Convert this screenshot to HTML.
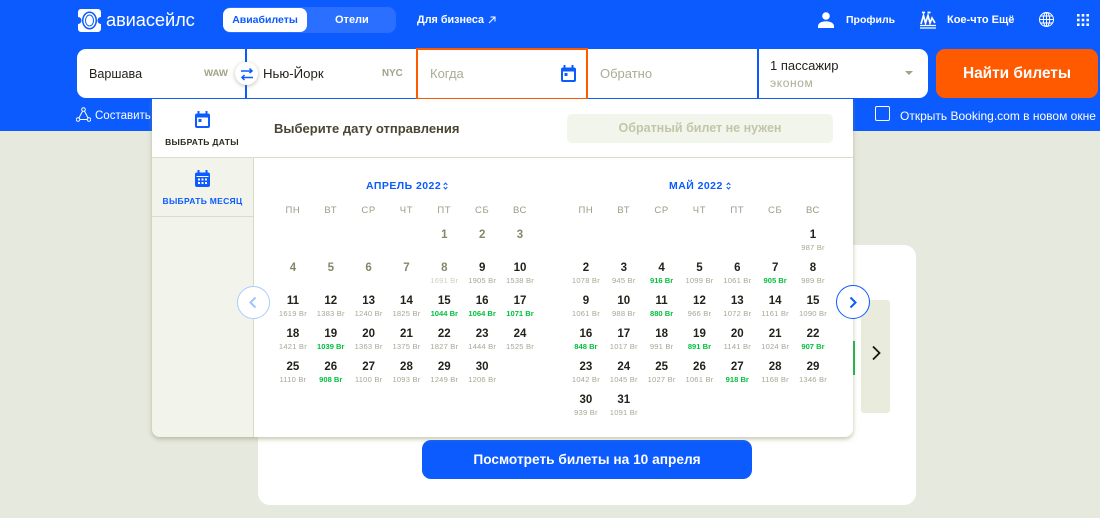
<!DOCTYPE html>
<html lang="ru"><head><meta charset="utf-8"><title>Авиасейлс</title>
<style>
*{box-sizing:border-box}
html,body{margin:0;padding:0}
body{width:1100px;height:518px;position:relative;overflow:hidden;background:#e6e9de;font-family:"Liberation Sans",sans-serif;color:#23231b}
.a{position:absolute;white-space:nowrap}
.hd{left:0;top:0;width:1100px;height:131px;background:#0b5bff}
.w{color:#fff;font-weight:700}
.m{position:absolute;display:grid;grid-template-columns:repeat(7,37.85px);grid-auto-rows:33px;top:219px;text-align:center}
.c b{display:block;margin-top:8px;height:16px;line-height:16px;font-size:11.5px;color:#23231b}
.c i{display:block;font-style:normal;height:10px;line-height:10px;font-size:7.6px;letter-spacing:.2px;color:#a6a893}
.c i.g{color:#00c13d;font-weight:700;letter-spacing:0}
.c i.l{color:#cfd0bd}
.c.p b{color:#87866a}
.wd{position:absolute;top:205px;display:grid;grid-template-columns:repeat(7,37.85px);text-align:center;font-size:9.5px;line-height:12px;letter-spacing:.6px;color:#9b9c84}
.mt{color:#0b5bff;font-weight:700;font-size:10.5px;letter-spacing:.45px;line-height:14px}
</style></head><body>
<div class="a hd"></div>

<!-- logo -->
<svg class="a" style="left:78px;top:9px" width="23" height="23" viewBox="0 0 23 23"><path d="M3 0h17a3 3 0 0 1 3 3v5a3.500 3.500 0 0 0 0 7v5a3 3 0 0 1-3 3H3a3 3 0 0 1-3-3v-5a3.500 3.500 0 0 0 0-7V3a3 3 0 0 1 3-3z" fill="#fff"/><ellipse cx="11.500" cy="11.500" rx="7.500" ry="9" fill="#0b5bff"/><ellipse cx="11.500" cy="11.500" rx="6" ry="7.500" fill="#fff"/><ellipse cx="11.500" cy="11.500" rx="4" ry="5.500" fill="none" stroke="#0b5bff" stroke-width="1"/></svg>
<div class="a" style="left:106px;top:9px;font-size:18.3px;line-height:22px;color:#fff;letter-spacing:-.1px">авиасейлс</div>

<!-- tabs -->
<div class="a" style="left:223px;top:7px;width:173px;height:26px;background:#2a6fff;border-radius:8px"></div>
<div class="a" style="left:223px;top:8px;width:84px;height:24px;background:#fff;border-radius:7px;text-align:center;font-weight:700;font-size:10.5px;line-height:24px;color:#0b5bff">Авиабилеты</div>
<div class="a w" style="left:335px;top:8px;font-size:11px;line-height:24px">Отели</div>
<div class="a w" style="left:417px;top:8px;font-size:10.8px;line-height:24px">Для бизнеса</div>
<svg class="a" style="left:488px;top:16px" width="8" height="8" viewBox="0 0 8 8"><path d="M1 7 7 1M2.500 1H7v4.500" fill="none" stroke="#fff" stroke-width="1"/></svg>

<!-- right nav -->
<svg class="a" style="left:818px;top:12px" width="16" height="16" viewBox="0 0 16 16"><circle cx="8" cy="4" r="3.800" fill="#fff"/><path d="M0 16v-2c0-3 4-4.800 8-4.800s8 1.800 8 4.800v2z" fill="#fff"/></svg>
<div class="a w" style="left:846px;top:8px;font-size:10.5px;line-height:24px">Профиль</div>
<svg class="a" style="left:919px;top:11px" width="18" height="18" viewBox="0 0 18 18" fill="none" stroke="#fff" stroke-width="1.700"><path d="M3 1.500h3M8.500 1.500h3"/><path d="M2 13 4.500 4.500l2 7.500 2.500-7.500 2 7.500 2-5 3 5"/><path d="M1 14.500h16M1 17h16" stroke-width="1.300"/></svg>
<div class="a w" style="left:947px;top:8px;font-size:11px;line-height:24px">Кое-что Ещё</div>
<svg class="a" style="left:1039px;top:12px" width="15" height="15" viewBox="0 0 15 15" fill="none" stroke="#fff" stroke-width="1"><circle cx="7.500" cy="7.500" r="7"/><ellipse cx="7.500" cy="7.500" rx="3.200" ry="7"/><path d="M7.500.5v14M.5 7.500h14M1.500 4h12M1.500 11h12"/></svg>
<svg class="a" style="left:1077px;top:14px" width="12" height="12" viewBox="0 0 12 12" fill="#fff"><rect x="0" y="0" width="2.600" height="2.600"/><rect x="4.700" y="0" width="2.600" height="2.600"/><rect x="9.400" y="0" width="2.600" height="2.600"/><rect x="0" y="4.700" width="2.600" height="2.600"/><rect x="4.700" y="4.700" width="2.600" height="2.600"/><rect x="9.400" y="4.700" width="2.600" height="2.600"/><rect x="0" y="9.400" width="2.600" height="2.600"/><rect x="4.700" y="9.400" width="2.600" height="2.600"/><rect x="9.400" y="9.400" width="2.600" height="2.600"/></svg>

<!-- search form -->
<div class="a" style="left:77px;top:49px;width:851px;height:49px;background:#fff;border-radius:9px"></div>
<div class="a" style="left:245px;top:49px;width:2px;height:50px;background:#0b5bff"></div>
<div class="a" style="left:245px;top:98px;width:172px;height:2px;background:#0b5bff"></div>
<div class="a" style="left:587px;top:98px;width:266px;height:2px;background:#0b5bff"></div>
<div class="a" style="left:757px;top:49px;width:2px;height:50px;background:#0b5bff"></div>
<div class="a" style="left:416px;top:48px;width:172px;height:52px;border:2px solid #ff5a00"></div>
<div class="a" style="left:89px;top:64px;font-size:12.6px;line-height:20px">Варшава</div>
<div class="a" style="left:204px;top:65px;font-size:9.600px;line-height:18px;font-weight:700;color:#9ea486">WAW</div>
<div class="a" style="left:263px;top:64px;font-size:13.200px;line-height:20px">Нью-Йорк</div>
<div class="a" style="left:382px;top:65px;font-size:9.800px;line-height:18px;font-weight:700;color:#9ea486">NYC</div>
<div class="a" style="left:430px;top:64px;font-size:13px;line-height:20px;color:#a9ae93">Когда</div>
<div class="a" style="left:600px;top:64px;font-size:13px;line-height:20px;color:#a9ae93">Обратно</div>
<div class="a" style="left:770px;top:56px;font-size:13px;line-height:20px">1 пассажир</div>
<div class="a" style="left:770px;top:74px;font-size:12px;letter-spacing:.6px;line-height:18px;color:#a9ae93">эконом</div>
<div class="a" style="left:905px;top:71px;width:0;height:0;border-left:4px solid transparent;border-right:4px solid transparent;border-top:4.500px solid #9ea486"></div>
<div class="a" style="left:936px;top:49px;width:162px;height:49px;background:#ff5a00;border-radius:9px;text-align:center;color:#fff;font-weight:700;font-size:15.400px;line-height:49px">Найти билеты</div>

<!-- swap -->
<div class="a" style="left:235px;top:62px;width:23px;height:23px;border-radius:50%;background:#fff;box-shadow:0 1px 4px rgba(120,120,70,.45)"></div>
<svg class="a" style="left:240px;top:67px" width="14" height="14" viewBox="0 0 14 14" fill="none" stroke="#0b5bff" stroke-width="1.500"><path d="M1 4h11M9.500 1.500 12 4 9.500 6M13 10.500H2M4.500 8 2 10.500 4.500 13"/></svg>
<!-- cal icon in form -->
<svg class="a" style="left:561px;top:65px" width="15" height="17" viewBox="0 0 15 17"><rect x="0" y="2.500" width="15" height="14.500" rx="2" fill="#0b5bff"/><rect x="2.500" y="0" width="2" height="4" fill="#0b5bff"/><rect x="10.500" y="0" width="2" height="4" fill="#0b5bff"/><rect x="2" y="6.500" width="11" height="8.500" fill="#fff"/><rect x="3.500" y="8" width="3" height="3" fill="#0b5bff"/></svg>

<!-- subrow -->
<svg class="a" style="left:76px;top:107px" width="15" height="15" viewBox="0 0 15 15" fill="none" stroke="#fff" stroke-width="1"><circle cx="7.500" cy="2.500" r="1.800"/><circle cx="2" cy="12.500" r="1.800"/><circle cx="13" cy="12.500" r="1.800"/><path d="M6.600 4 2.900 11M8.400 4l3.700 7M3.800 12.500h7.400"/></svg>
<div class="a" style="left:95px;top:107px;font-size:11.500px;line-height:18px;color:#fff">Составить</div>
<div class="a" style="left:875px;top:106px;width:15px;height:15px;border:1px solid #fff;border-radius:2px"></div>
<div class="a" style="left:900px;top:107px;font-size:12px;line-height:18px;color:#fff">Открыть Booking.com в новом окне</div>

<!-- background card -->
<div class="a" style="left:258px;top:245px;width:658px;height:260px;background:#fff;border-radius:12px"></div>
<div class="a" style="left:853px;top:341px;width:2px;height:34px;background:#19b84d"></div>
<div class="a" style="left:861px;top:300px;width:29px;height:113px;background:#e9ebdd;border-radius:3px"></div>
<svg class="a" style="left:870px;top:345px" width="12" height="16" viewBox="0 0 12 16"><path d="M3 1.500 9.500 8 3 14.500" fill="none" stroke="#16160f" stroke-width="1.800"/></svg>
<div class="a" style="left:422px;top:440px;width:330px;height:39px;background:#0b5bff;border-radius:9px;text-align:center;color:#fff;font-weight:700;font-size:13.700px;line-height:39px">Посмотреть билеты на 10 апреля</div>

<!-- popup -->
<div class="a" style="left:152px;top:99px;width:701px;height:338px;background:#fff;border-radius:0 0 8px 8px;box-shadow:0 2px 5px rgba(140,140,90,.5)"></div>
<div class="a" style="left:152px;top:157px;width:101px;height:280px;background:#f2f4ec;border-radius:0 0 0 8px"></div>
<div class="a" style="left:152px;top:157px;width:701px;height:1px;background:#dcdccd"></div>
<div class="a" style="left:152px;top:216px;width:101px;height:1px;background:#dcdccd"></div>
<div class="a" style="left:253px;top:158px;width:1px;height:279px;background:#d9d9c8"></div>

<svg class="a" style="left:195px;top:111px" width="15" height="17" viewBox="0 0 15 17"><rect x="0" y="2.500" width="15" height="14.500" rx="2" fill="#0b5bff"/><rect x="2.500" y="0" width="2" height="4" fill="#0b5bff"/><rect x="10.500" y="0" width="2" height="4" fill="#0b5bff"/><rect x="2" y="6.500" width="11" height="8.500" fill="#fff"/><rect x="3.500" y="8" width="3" height="3" fill="#0b5bff"/></svg>
<div class="a" style="left:152px;top:135px;width:100px;text-align:center;font-size:8.500px;line-height:14px;font-weight:700;letter-spacing:.3px;color:#2b2a1f">ВЫБРАТЬ ДАТЫ</div>
<svg class="a" style="left:195px;top:170px" width="15" height="17" viewBox="0 0 15 17"><rect x="0" y="2.500" width="15" height="14.500" rx="2" fill="#0b5bff"/><rect x="2.500" y="0" width="2" height="4" fill="#0b5bff"/><rect x="10.500" y="0" width="2" height="4" fill="#0b5bff"/><g fill="#fff"><rect x="1.500" y="6" width="12" height="1"/><rect x="3" y="8.500" width="2" height="2"/><rect x="6.500" y="8.500" width="2" height="2"/><rect x="10" y="8.500" width="2" height="2"/><rect x="3" y="12" width="2" height="2"/><rect x="6.500" y="12" width="2" height="2"/><rect x="10" y="12" width="2" height="2"/></g></svg>
<div class="a" style="left:152px;top:194px;width:101px;text-align:center;font-size:8.500px;line-height:14px;font-weight:700;letter-spacing:.3px;color:#0b5bff">ВЫБРАТЬ МЕСЯЦ</div>

<div class="a" style="left:274px;top:119px;font-size:13px;line-height:20px;font-weight:700;color:#4a4632">Выберите дату отправления</div>
<div class="a" style="left:567px;top:114px;width:266px;height:29px;background:#f2f5ec;border-radius:5px;text-align:center;font-size:12.500px;line-height:29px;font-weight:700;color:#c4c5a8">Обратный билет не нужен</div>

<!-- months -->
<div class="a mt" style="left:366px;top:179px">АПРЕЛЬ 2022</div>
<svg class="a" style="left:443px;top:182px" width="5" height="8" viewBox="0 0 5 8" fill="none" stroke="#0b5bff" stroke-width="1"><path d="M.7 3 2.500 1 4.300 3M.7 5 2.500 7 4.300 5"/></svg>
<div class="a mt" style="left:669px;top:179px">МАЙ 2022</div>
<svg class="a" style="left:726px;top:182px" width="5" height="8" viewBox="0 0 5 8" fill="none" stroke="#0b5bff" stroke-width="1"><path d="M.7 3 2.500 1 4.300 3M.7 5 2.500 7 4.300 5"/></svg>

<div class="wd" style="left:274px"><span>ПН</span><span>ВТ</span><span>СР</span><span>ЧТ</span><span>ПТ</span><span>СБ</span><span>ВС</span></div>
<div class="wd" style="left:567px"><span>ПН</span><span>ВТ</span><span>СР</span><span>ЧТ</span><span>ПТ</span><span>СБ</span><span>ВС</span></div>

<div class="m" style="left:274px">
<div></div><div></div><div></div><div></div>
<div class="c p"><b>1</b></div><div class="c p"><b>2</b></div><div class="c p"><b>3</b></div>
<div class="c p"><b>4</b></div><div class="c p"><b>5</b></div><div class="c p"><b>6</b></div><div class="c p"><b>7</b></div>
<div class="c p"><b>8</b><i class="l">1691 Br</i></div><div class="c"><b>9</b><i>1905 Br</i></div><div class="c"><b>10</b><i>1538 Br</i></div>
<div class="c"><b>11</b><i>1619 Br</i></div><div class="c"><b>12</b><i>1383 Br</i></div><div class="c"><b>13</b><i>1240 Br</i></div><div class="c"><b>14</b><i>1825 Br</i></div><div class="c"><b>15</b><i class="g">1044 Br</i></div><div class="c"><b>16</b><i class="g">1064 Br</i></div><div class="c"><b>17</b><i class="g">1071 Br</i></div>
<div class="c"><b>18</b><i>1421 Br</i></div><div class="c"><b>19</b><i class="g">1039 Br</i></div><div class="c"><b>20</b><i>1363 Br</i></div><div class="c"><b>21</b><i>1375 Br</i></div><div class="c"><b>22</b><i>1827 Br</i></div><div class="c"><b>23</b><i>1444 Br</i></div><div class="c"><b>24</b><i>1525 Br</i></div>
<div class="c"><b>25</b><i>1110 Br</i></div><div class="c"><b>26</b><i class="g">908 Br</i></div><div class="c"><b>27</b><i>1100 Br</i></div><div class="c"><b>28</b><i>1093 Br</i></div><div class="c"><b>29</b><i>1249 Br</i></div><div class="c"><b>30</b><i>1206 Br</i></div>
</div>

<div class="m" style="left:567px">
<div></div><div></div><div></div><div></div><div></div><div></div>
<div class="c"><b>1</b><i>987 Br</i></div>
<div class="c"><b>2</b><i>1078 Br</i></div><div class="c"><b>3</b><i>945 Br</i></div><div class="c"><b>4</b><i class="g">916 Br</i></div><div class="c"><b>5</b><i>1099 Br</i></div><div class="c"><b>6</b><i>1061 Br</i></div><div class="c"><b>7</b><i class="g">905 Br</i></div><div class="c"><b>8</b><i>989 Br</i></div>
<div class="c"><b>9</b><i>1061 Br</i></div><div class="c"><b>10</b><i>988 Br</i></div><div class="c"><b>11</b><i class="g">880 Br</i></div><div class="c"><b>12</b><i>966 Br</i></div><div class="c"><b>13</b><i>1072 Br</i></div><div class="c"><b>14</b><i>1161 Br</i></div><div class="c"><b>15</b><i>1090 Br</i></div>
<div class="c"><b>16</b><i class="g">848 Br</i></div><div class="c"><b>17</b><i>1017 Br</i></div><div class="c"><b>18</b><i>991 Br</i></div><div class="c"><b>19</b><i class="g">891 Br</i></div><div class="c"><b>20</b><i>1141 Br</i></div><div class="c"><b>21</b><i>1024 Br</i></div><div class="c"><b>22</b><i class="g">907 Br</i></div>
<div class="c"><b>23</b><i>1042 Br</i></div><div class="c"><b>24</b><i>1045 Br</i></div><div class="c"><b>25</b><i>1027 Br</i></div><div class="c"><b>26</b><i>1061 Br</i></div><div class="c"><b>27</b><i class="g">918 Br</i></div><div class="c"><b>28</b><i>1168 Br</i></div><div class="c"><b>29</b><i>1346 Br</i></div>
<div class="c"><b>30</b><i>939 Br</i></div><div class="c"><b>31</b><i>1091 Br</i></div>
</div>

<!-- nav arrows -->
<div class="a" style="left:237px;top:286px;width:33px;height:33px;border-radius:50%;background:#fff;border:1px solid #a8cdff"></div>
<svg class="a" style="left:248px;top:296px" width="10" height="13" viewBox="0 0 10 13"><path d="M7.500 1.500 2.500 6.500l5 5" fill="none" stroke="#9cc4ff" stroke-width="2"/></svg>
<div class="a" style="left:836px;top:285px;width:34px;height:34px;border-radius:50%;background:#fff;border:1px solid #0b5bff"></div>
<svg class="a" style="left:848px;top:296px" width="10" height="13" viewBox="0 0 10 13"><path d="M2.500 1.500l5 5-5 5" fill="none" stroke="#0b5bff" stroke-width="2"/></svg>
</body></html>
